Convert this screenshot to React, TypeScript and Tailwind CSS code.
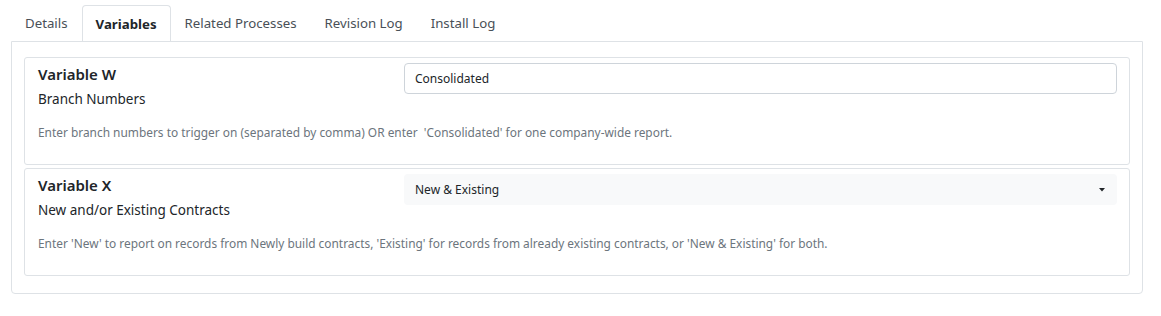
import React from "react";

const tabs = ["Details", "Variables", "Related Processes", "Revision Log", "Install Log"];

function Card({
  title,
  subtitle,
  help,
  children,
}: {
  title: string;
  subtitle: string;
  help: string;
  children: React.ReactNode;
}) {
  return (
    <div className="border border-[#dee2e6] rounded-[3px] pl-[13px] pr-[12px] pt-[5px] h-[108px]">
      <div className="flex">
        <div className="w-[366px] shrink-0">
          <div className="text-[15px] font-semibold text-[#212529] leading-[22px]">{title}</div>
          <div className="text-[13.5px] text-[#212529] leading-[20px] mt-[4px]">{subtitle}</div>
        </div>
        <div className="flex-1">{children}</div>
      </div>
      <div className="text-[11.9px] text-[#6c757d] leading-[16px] mt-[15px] whitespace-pre-wrap">{help}</div>
    </div>
  );
}

export default function App() {
  return (
    <div
      className="w-[1161px] h-[316px] bg-white pl-[11px] pt-[5px]"
      style={{ fontFamily: '"Noto Sans", "Open Sans", sans-serif' }}
    >
      <div className="flex h-[36px]">
        {tabs.map((t) => {
          const active = t === "Variables";
          return (
            <div
              key={t}
              className={
                active
                  ? "px-[13px] pt-[2px] flex items-center text-[13.25px] font-bold text-[#212529] border border-b-0 border-[#dee2e6] rounded-t-[4px] bg-white"
                  : "px-[13px] pt-[2px] flex items-center text-[13.25px] text-[#495057] border border-transparent"
              }
            >
              {t}
            </div>
          );
        })}
      </div>
      <div className="w-[1132px] border border-[#dee2e6] rounded-b-[4px] h-[253px] px-[12px] pt-[15px]">
        <div className="flex flex-col gap-[3px]">
          <Card
            title="Variable W"
            subtitle="Branch Numbers"
            help="Enter branch numbers to trigger on (separated by comma) OR enter  'Consolidated' for one company-wide report."
          >
            <div className="h-[31px] border border-[#ced4da] rounded-[4px] flex items-center px-[10px] text-[12px] text-[#212529]">
              Consolidated
            </div>
          </Card>
          <Card
            title="Variable X"
            subtitle="New and/or Existing Contracts"
            help="Enter 'New' to report on records from Newly build contracts, 'Existing' for records from already existing contracts, or 'New & Existing' for both."
          >
            <div className="h-[31px] bg-[#f8f9fa] rounded-[4px] flex items-center justify-between pl-[11px] pr-[12px] text-[12px] text-[#212529]">
              <span>New &amp; Existing</span>
              <svg width="6" height="4" viewBox="0 0 6 4">
                <path d="M0 0 L6 0 L3 3.5 Z" fill="#212529" />
              </svg>
            </div>
          </Card>
        </div>
      </div>
    </div>
  );
}
